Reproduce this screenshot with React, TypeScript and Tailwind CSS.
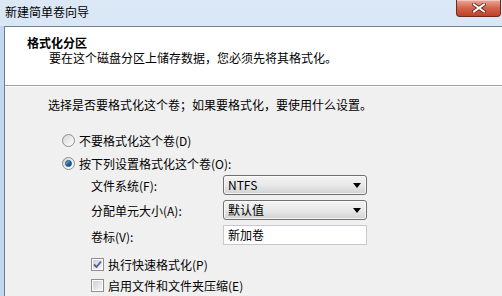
import React from "react";

const font = { fontFamily: '"Noto Sans CJK SC", "Noto Sans", sans-serif' };

const CloseButton = () => (
  <div className="ml-auto mr-[1px] self-start w-[45px] h-[17px] rounded-b-[4px] border border-t-0 border-[#6e2a1c] bg-gradient-to-b from-[#e9a99a] via-[#d4634b] to-[#c0412a] flex items-center justify-center shadow-[inset_0_1px_0_rgba(255,255,255,0.4)]">
    <svg width="14" height="10" viewBox="0 0 14 10">
      <path
        d="M2 1.5 L12 8.5 M12 1.5 L2 8.5"
        stroke="#5a1e14"
        strokeWidth="3.6"
        strokeLinecap="square"
      />
      <path
        d="M2 1.5 L12 8.5 M12 1.5 L2 8.5"
        stroke="#ffffff"
        strokeWidth="2"
        strokeLinecap="square"
      />
    </svg>
  </div>
);

const Radio = ({ checked }: { checked?: boolean }) => (
  <span className="w-[13px] h-[13px] rounded-full border border-[#8f8f8f] bg-gradient-to-br from-[#d6d6d6] to-[#ffffff] flex items-center justify-center shrink-0">
    {checked && (
      <span className="w-[7px] h-[7px] rounded-full bg-gradient-to-br from-[#8ec4ea] via-[#1f6fae] to-[#0f3f6e] border border-[#1b4a7a]" />
    )}
  </span>
);

const Checkbox = ({ checked }: { checked?: boolean }) => (
  <span className="w-[13px] h-[13px] border border-[#8f8f8f] bg-white p-[1px] flex shrink-0">
    <span className="flex-1 bg-gradient-to-br from-[#d0d0d0] to-[#f6f6f6] flex items-center justify-center">
      {checked && (
        <svg width="9" height="9" viewBox="0 0 9 9">
          <path
            d="M1 4.5 L3.5 7 L8 1.5"
            stroke="#4a5f9c"
            strokeWidth="1.8"
            fill="none"
          />
        </svg>
      )}
    </span>
  </span>
);

const Select = ({ value }: { value: string }) => (
  <div className="w-[144px] h-[20px] rounded-[3px] border border-[#707070] bg-gradient-to-b from-[#f3f3f3] via-[#e9e9e9] to-[#d2d2d2] flex items-center pl-[4px] pr-[5px] shadow-[inset_0_0_0_1px_rgba(255,255,255,0.7)]">
    <span className="flex-1 leading-none">{value}</span>
    <svg width="8" height="5" viewBox="0 0 8 5">
      <path d="M0 0 H8 L4 5 Z" fill="#000" />
    </svg>
  </div>
);

export default function App() {
  return (
    <div
      className="w-[502px] h-[296px] overflow-hidden flex flex-col bg-gradient-to-b from-[#dbe8f6] to-[#c6daf1] text-[12px] text-black"
      style={font}
    >
      {/* Title bar */}
      <div className="h-[26px] flex shrink-0">
        <span className="pl-[5px] pt-[4px] leading-[16px] text-[12px]">新建简单卷向导</span>
        <CloseButton />
      </div>

      <div className="flex flex-1 min-h-0">
        <div className="w-[4px] bg-[#c3d7ee]" />
        <div className="flex-1 flex flex-col border-l border-t border-[#6f7e90] bg-[#f0f0f0]">
          {/* Header */}
          <div className="h-[59px] bg-white border-b border-[#a0a0a0] pl-[22px] pt-[9px] shrink-0">
            <div className="font-bold leading-[14px]">格式化分区</div>
            <div className="pl-[22px] leading-[14px] mt-[1px]">
              要在这个磁盘分区上储存数据，您必须先将其格式化。
            </div>
          </div>
          <div className="h-px bg-white shrink-0" />

          {/* Body */}
          <div className="pl-[43px] pt-[10px] flex flex-col">
            <div className="leading-[16px]">
              选择是否要格式化这个卷；如果要格式化，要使用什么设置。
            </div>

            <div className="mt-[16px] flex flex-col">
              <div className="h-[23px] flex items-center gap-[4px] pl-[14px]">
                <Radio />
                <span>不要格式化这个卷(D)</span>
              </div>
              <div className="h-[23px] flex items-center gap-[4px] pl-[14px]">
                <Radio checked />
                <span className="pt-[1px]">按下列设置格式化这个卷(O):</span>
              </div>
            </div>

            <div className="pl-[43px] flex flex-col gap-[5px]">
              <div className="h-[20px] flex items-center">
                <span className="w-[132px] pt-[2px]">文件系统(F):</span>
                <Select value="NTFS" />
              </div>
              <div className="h-[20px] flex items-center">
                <span className="w-[132px] pt-[2px]">分配单元大小(A):</span>
                <Select value="默认值" />
              </div>
              <div className="h-[20px] flex items-center">
                <span className="w-[132px] pt-[3px]">卷标(V):</span>
                <div className="w-[144px] h-[20px] border border-[#c5c8cf] bg-white flex items-center pl-[4px]">
                  新加卷
                </div>
              </div>
            </div>

            <div className="pl-[43px] mt-[9px] flex flex-col">
              <div className="h-[21px] flex items-center gap-[4px]">
                <Checkbox checked />
                <span>执行快速格式化(P)</span>
              </div>
              <div className="h-[21px] flex items-center gap-[4px]">
                <Checkbox />
                <span>启用文件和文件夹压缩(E)</span>
              </div>
            </div>
          </div>
        </div>
      </div>
    </div>
  );
}
